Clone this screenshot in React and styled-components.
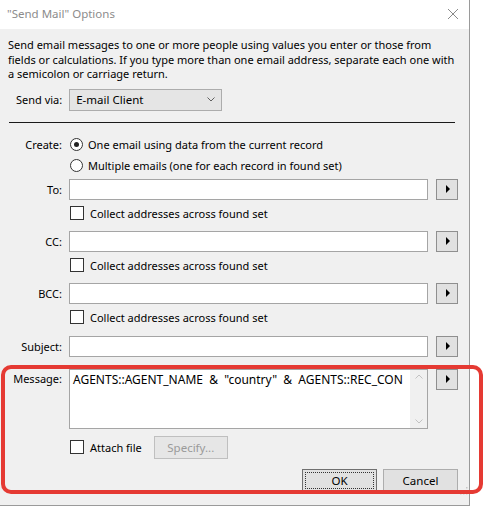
import React from 'react'
import styled, { createGlobalStyle } from 'styled-components'

const Global = createGlobalStyle`
  html, body {
    margin: 0;
    padding: 0;
    background: #ffffff;
  }
  body {
    font-family: "Noto Sans", "Open Sans", sans-serif;
    font-size: 11px;
    color: #000;
  }
`

const Page = styled.div`
  position: relative;
  width: 484px;
  height: 507px;
  overflow: hidden;
`

const Window = styled.div`
  width: 470px;
  height: 506px;
  box-sizing: border-box;
  border-right: 1px solid #9a9a9a;
  border-bottom: 1px solid #9a9a9a;
  display: flex;
  flex-direction: column;
`

const TitleBar = styled.div`
  height: 27px;
  flex: none;
  background: #fff;
  display: flex;
  align-items: center;
  justify-content: space-between;
  padding: 0 10px 2px 7px;
  color: #8c8c8c;
  font-size: 11.5px;
`

const Body = styled.div`
  flex: 1;
  background: #f0f0f0;
  padding: 9px 0 0 0;
`

const Description = styled.p`
  margin: 0 0 0 8px;
  line-height: 14.5px;
  white-space: nowrap;
`

const SendRow = styled.div`
  display: flex;
  align-items: center;
  gap: 7px;
  margin: 7px 0 0 16px;
`

const Dropdown = styled.div`
  width: 153px;
  height: 22px;
  box-sizing: border-box;
  border: 1px solid #acacac;
  background: #e5e5e5;
  display: flex;
  align-items: center;
  justify-content: space-between;
  padding: 0 6px 0 6px;
  font-size: 11.5px;
`

const Rule = styled.div`
  height: 1px;
  background: #1a1a1a;
  margin: 11px 14px 0 9px;
`

const Row = styled.div`
  display: flex;
  gap: 7px;
  margin-top: ${p => p.$mt}px;
`

const Label = styled.div`
  width: 62px;
  flex: none;
  text-align: right;
  line-height: ${p => p.$lh || 21}px;
`

const Field = styled.div`
  width: 389px;
  display: flex;
  flex-direction: column;
`

const RadioLine = styled.div`
  height: 21px;
  display: flex;
  align-items: center;
  gap: 5px;
  padding-left: 1px;
`

const Radio = styled.span`
  width: 13px;
  height: 13px;
  box-sizing: border-box;
  border-radius: 50%;
  border: 1px solid #333;
  background: #fff;
  display: flex;
  align-items: center;
  justify-content: center;
  &::after {
    content: '';
    width: 5px;
    height: 5px;
    border-radius: 50%;
    background: ${p => (p.$checked ? '#222' : 'transparent')};
  }
`

const InputLine = styled.div`
  display: flex;
  gap: 8px;
  align-items: flex-start;
`

const TextBox = styled.div`
  width: 360px;
  height: ${p => p.$h || 21}px;
  box-sizing: border-box;
  border: 1px solid #a5a5a5;
  background: #fff;
  display: flex;
`

const MessageText = styled.div`
  flex: 1;
  padding: 2px 0 0 3px;
  white-space: pre;
  line-height: 15px;
  font-size: 12px;
`

const Scrollbar = styled.div`
  width: 17px;
  background: #f0f0f0;
  display: flex;
  flex-direction: column;
  justify-content: space-between;
  align-items: center;
  padding: 4px 0;
`

const ArrowButton = styled.div`
  width: 22px;
  height: 21px;
  box-sizing: border-box;
  border: 1px solid #8f8f8f;
  background: #e1e1e1;
  display: flex;
  align-items: center;
  justify-content: center;
  &::after {
    content: '';
    margin-left: 2px;
    border-left: 4px solid #000;
    border-top: 4px solid transparent;
    border-bottom: 4px solid transparent;
  }
`

const CheckLine = styled.div`
  display: flex;
  align-items: center;
  gap: 6px;
  height: ${p => p.$h || 13}px;
  margin-top: ${p => p.$mt || 7}px;
  padding-left: 1px;
`

const Checkbox = styled.span`
  width: 14px;
  height: 14px;
  box-sizing: border-box;
  border: 1px solid #333;
  background: #fff;
  flex: none;
`

const Button = styled.div`
  width: ${p => p.$w || 75}px;
  height: 23px;
  box-sizing: border-box;
  border: 1px solid ${p => (p.$disabled ? '#bfbfbf' : '#adadad')};
  background: ${p => (p.$disabled ? '#e6e6e6' : '#e1e1e1')};
  color: ${p => (p.$disabled ? '#9a9a9a' : '#000')};
  display: flex;
  align-items: center;
  justify-content: center;
  position: relative;
  font-size: 11.5px;
  ${p =>
    p.$focused &&
    `
    border-color: #707070;
    &::before {
      content: '';
      position: absolute;
      inset: 2px;
      border: 1px dotted #333;
    }
  `}
`

const SpecifyButton = styled(Button)`
  margin-left: 6px;
`

const ButtonBar = styled.div`
  display: flex;
  justify-content: flex-end;
  gap: 6px;
  margin-top: 10px;
`

const Highlight = styled.div`
  position: absolute;
  left: 1px;
  top: 365px;
  width: 482px;
  height: 129px;
  box-sizing: border-box;
  border: 4.5px solid #e53a33;
  border-radius: 10px;
  pointer-events: none;
`

const Grip = styled.svg`
  position: absolute;
  right: 16px;
  bottom: 12px;
`

const Close = () => (
  <svg width="12" height="12" viewBox="0 0 12 12">
    <path d="M1 1L11 11M11 1L1 11" stroke="#8a8a8a" strokeWidth="1" />
  </svg>
)

const Chevron = ({ up, color = '#606060' }) => (
  <svg width="8" height="5" viewBox="0 0 8 5">
    <path d={up ? 'M0.5 4.5L4 1L7.5 4.5' : 'M0.5 0.5L4 4L7.5 0.5'} stroke={color} fill="none" strokeWidth="1" />
  </svg>
)

const addressFields = [
  { label: 'To:', mt: 3 },
  { label: 'CC:', mt: 11 },
  { label: 'BCC:', mt: 11 }
]

export default function App() {
  return (
    <Page>
      <Global />
      <Window>
        <TitleBar>
          <span>"Send Mail" Options</span>
          <Close />
        </TitleBar>
        <Body>
          <Description>
            Send email messages to one or more people using values you enter or those from
            <br />
            fields or calculations. If you type more than one email address, separate each one with
            <br />
            a semicolon or carriage return.
          </Description>
          <SendRow>
            <span>Send via:</span>
            <Dropdown>
              <span>E-mail Client</span>
              <Chevron />
            </Dropdown>
          </SendRow>
          <Rule />

          <Row $mt={11}>
            <Label>Create:</Label>
            <Field>
              <RadioLine>
                <Radio $checked />
                <span>One email using data from the current record</span>
              </RadioLine>
              <RadioLine>
                <Radio />
                <span>Multiple emails (one for each record in found set)</span>
              </RadioLine>
            </Field>
          </Row>

          {addressFields.map(f => (
            <Row key={f.label} $mt={f.mt}>
              <Label>{f.label}</Label>
              <Field>
                <InputLine>
                  <TextBox />
                  <ArrowButton />
                </InputLine>
                <CheckLine>
                  <Checkbox />
                  <span>Collect addresses across found set</span>
                </CheckLine>
              </Field>
            </Row>
          ))}

          <Row $mt={12}>
            <Label>Subject:</Label>
            <Field>
              <InputLine>
                <TextBox />
                <ArrowButton />
              </InputLine>
            </Field>
          </Row>

          <Row $mt={12}>
            <Label $lh={19}>Message:</Label>
            <Field>
              <InputLine>
                <TextBox $h={60}>
                  <MessageText>{'AGENTS::AGENT_NAME  &  "country"  &  AGENTS::REC_CON'}</MessageText>
                  <Scrollbar>
                    <Chevron up color="#c2c2c2" />
                    <Chevron color="#c2c2c2" />
                  </Scrollbar>
                </TextBox>
                <ArrowButton />
              </InputLine>
              <CheckLine $h={23} $mt={7}>
                <Checkbox />
                <span>Attach file</span>
                <SpecifyButton $w={74} $disabled>Specify...</SpecifyButton>
              </CheckLine>
              <ButtonBar>
                <Button $focused>OK</Button>
                <Button>Cancel</Button>
              </ButtonBar>
            </Field>
          </Row>
        </Body>
      </Window>
      <Grip width="10" height="10" viewBox="0 0 10 10">
        {[[8, 0], [8, 3], [5, 3], [8, 6], [5, 6], [2, 6]].map(([x, y]) => (
          <rect key={`${x}-${y}`} x={x} y={y + 2} width="1.5" height="1.5" fill="#c8c8c8" />
        ))}
      </Grip>
      <Highlight />
    </Page>
  )
}
